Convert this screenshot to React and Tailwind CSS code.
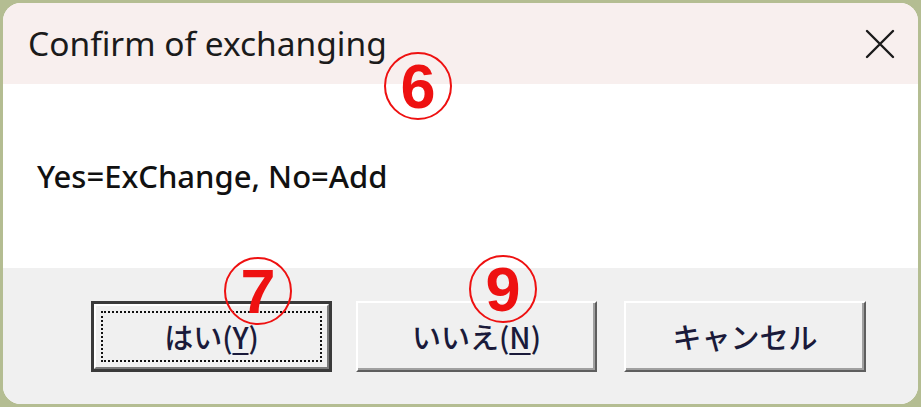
import React from "react";

function Circled({ n, className }) {
  return (
    <div
      className={
        "absolute w-[68px] h-[68px] rounded-full border-[2.5px] border-[#ee1111] flex items-center justify-center text-[#ee1111] font-bold text-[63px] leading-none " +
        className
      }
      style={{ fontFamily: '"Liberation Sans", Arial, sans-serif' }}
    >
      {n}
    </div>
  );
}

function Btn({ children, isDefault, className }) {
  if (isDefault) {
    return (
      <div className={"h-[71px] border-[3px] border-[#3a3a3a] " + className}>
        <div className="h-full w-full border-2 border-t-white border-l-white border-r-[#7a7a7a] border-b-[#7a7a7a] bg-[#f0f0f0] p-[5px]">
          <div className="h-full w-full border-[2.5px] border-dotted border-[#111] flex items-center justify-center">
            {children}
          </div>
        </div>
      </div>
    );
  }
  return (
    <div
      className={
        "h-[71px] border-2 border-t-white border-l-white border-r-[#5e5e5e] border-b-[#5e5e5e] shadow-[inset_-2px_-2px_0_#a0a0a0] bg-[#f0f0f0] flex items-center justify-center " +
        className
      }
    >
      {children}
    </div>
  );
}

export default function App() {
  const latin = { fontFamily: '"Noto Sans", "Noto Sans CJK JP", sans-serif' };
  const jp = { fontFamily: '"Noto Sans CJK JP", "Noto Sans", sans-serif' };
  return (
    <div className="w-[921px] h-[407px] bg-[#b4bd92] p-[3px] overflow-hidden">
      <div className="relative w-full h-full rounded-[18px] overflow-hidden flex flex-col bg-white">
        <div className="h-[81px] shrink-0 bg-[#f8efee] flex items-center justify-between pl-[25px] pr-[23px]">
          <span className="text-[33.5px] text-[#1b1b1b] leading-none" style={latin}>
            Confirm of exchanging
          </span>
          <svg width="30" height="30" viewBox="0 0 30 30">
            <path d="M2 2 L28 28 M28 2 L2 28" stroke="#1a1a1a" strokeWidth="2.4" strokeLinecap="round" />
          </svg>
        </div>
        <div className="h-[184px] shrink-0 bg-white flex items-center pl-[34px]">
          <span className="text-[31px] text-[#111] font-medium leading-none" style={latin}>
            Yes=ExChange, No=Add
          </span>
        </div>
        <div className="flex-1 bg-[#f0f0f0] flex items-start pt-[33px] pl-[88px]">
          <Btn isDefault className="w-[241px]">
            <span className="text-[29px] font-medium text-[#1a1a3a] leading-none" style={jp}>
              はい(<span className="underline underline-offset-4">Y</span>)
            </span>
          </Btn>
          <Btn className="w-[241px] ml-[24px]">
            <span className="text-[29px] font-medium text-[#1a1a3a] leading-none" style={jp}>
              いいえ(<span className="underline underline-offset-4">N</span>)
            </span>
          </Btn>
          <Btn className="w-[242px] ml-[27px]">
            <span className="text-[29px] font-medium text-[#1a1a3a] leading-none" style={jp}>
              キャンセル
            </span>
          </Btn>
        </div>
        <Circled n="6" className="left-[381px] top-[49px]" />
        <Circled n="7" className="left-[221px] top-[254px]" />
        <Circled n="9" className="left-[466px] top-[252px]" />
      </div>
    </div>
  );
}
